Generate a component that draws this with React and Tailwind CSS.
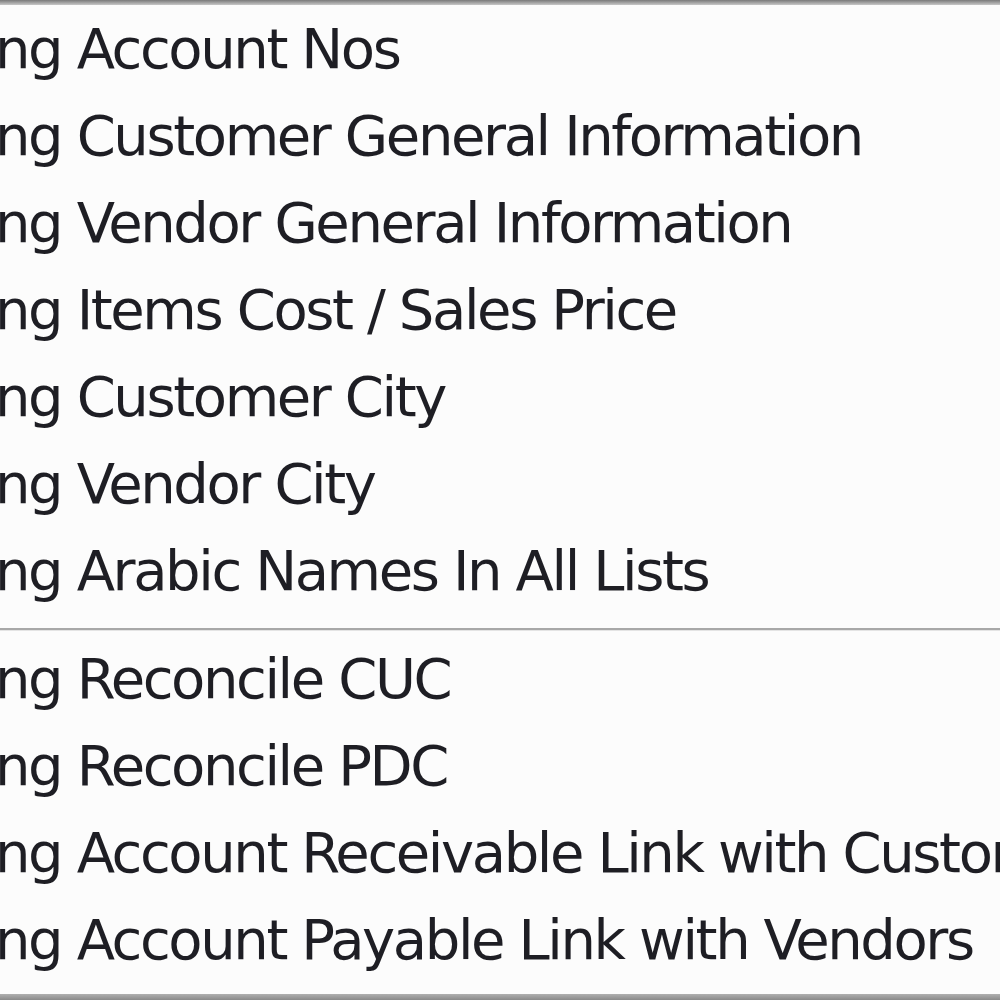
const topItems = [
  "ng Account Nos",
  "ng Customer General Information",
  "ng Vendor General Information",
  "ng Items Cost / Sales Price",
  "ng Customer City",
  "ng Vendor City",
  "ng Arabic Names In All Lists",
];

const bottomItems = [
  "ng Reconcile CUC",
  "ng Reconcile PDC",
  "ng Account Receivable Link with Customers",
  "ng Account Payable Link with Vendors",
];

function MenuItem({ label }) {
  return (
    <div className="h-[87px] leading-[87px] whitespace-nowrap -ml-[5px] text-[56px] tracking-[-2.4px] text-[#1e1e24] blur-[0.5px]">
      {label}
    </div>
  );
}

export default function App() {
  return (
    <div
      className="w-[1000px] h-[1000px] overflow-hidden bg-[#fcfcfc] flex flex-col"
      style={{ fontFamily: "Tahoma, 'DejaVu Sans', sans-serif" }}
    >
      <div className="h-[5px] bg-gradient-to-b from-[#7a7a7a] to-[#c8c8c8]" />
      <div className="flex-1 flex flex-col">
        {topItems.map((t) => (
          <MenuItem key={t} label={t} />
        ))}
        <div className="mt-[14px] mb-[4px] flex flex-col">
          <div className="h-[2px] bg-[#a8a8a8]" />
          <div className="h-[1px] bg-[#e4e4e4]" />
        </div>
        {bottomItems.map((t) => (
          <MenuItem key={t} label={t} />
        ))}
      </div>
      <div className="h-[6px] bg-gradient-to-b from-[#b0b0b0] to-[#8a8a8a]" />
    </div>
  );
}
